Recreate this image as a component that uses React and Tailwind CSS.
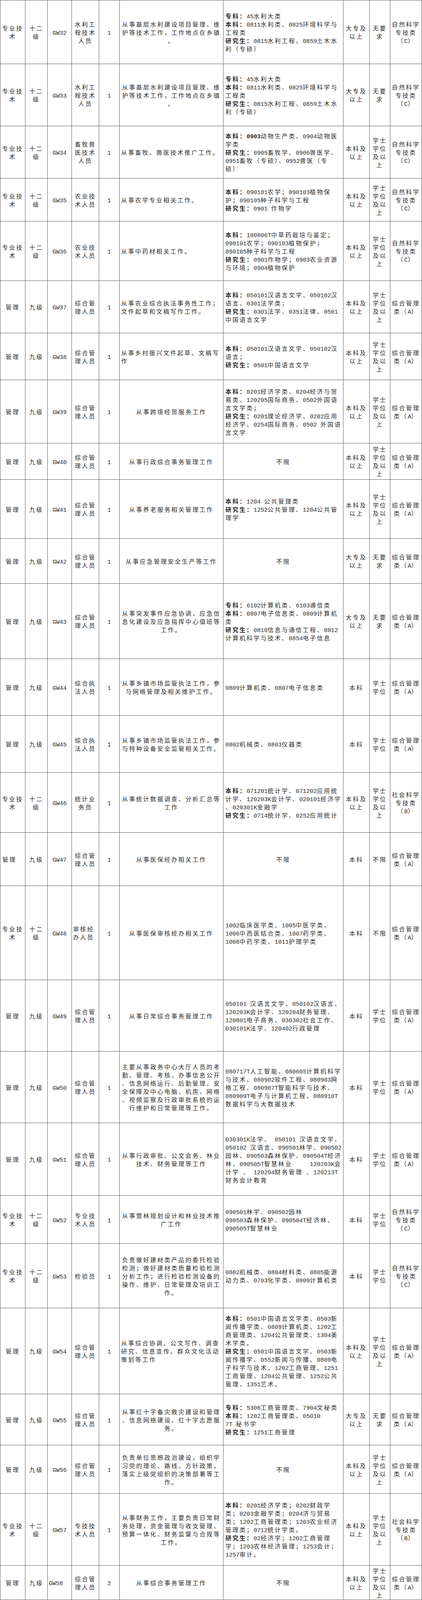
import React from "react";

const ZY = "专业技\n术";
const SEJ = "十二\n级";
const GL = "管理";
const JJ = "九级";
const ZHGL = "综合管\n理人员";
const ZHZF = "综合执\n法人员";
const DZ = "大专及\n以上";
const BKS = "本科及\n以上";
const BK = "本科";
const WYQ = "无要\n求";
const XSJ = "学士\n学位\n及以\n上";
const XS = "学士\n学位";
const BX = "不限";
const ZRC = "自然科学\n专技类\n（C）";
const ZHA = "综合管理\n类（A）";
const SHB = "社会科学\n专技类\n（B）";

const SL_F = "从事基层水利建设项目管理、维\n护等技术工作，工作地点在乡镇\n。";
const SL_G =
  "**专科：**45水利大类\n**本科：**0811水利类、0825环境科学与\n工程类\n**研究生：**0815水利工程、0859土木水\n利（专硕）";

const rows = [
  { h: "h-[163px]", a: ZY, b: SEJ, c: "GW32", d: "水利工\n程技术\n人员", e: "1", f: SL_F, g: SL_G, i: DZ, j: WYQ, k: ZRC },
  { h: "h-[159px]", a: ZY, b: SEJ, c: "GW33", d: "水利工\n程技术\n人员", e: "1", f: SL_F, g: SL_G, i: DZ, j: WYQ, k: ZRC },
  {
    h: "h-[134px]", a: ZY, b: SEJ, c: "GW34", d: "畜牧兽\n医技术\n人员", e: "1",
    f: "从事畜牧、兽医技术推广工作。", fl: true,
    g: "**本科：0903**动物生产类、0904动物医\n学类\n**研究生：**0905畜牧学、0906兽医学、\n0951畜牧（专硕）、0952兽医（专\n硕）",
    i: BKS, j: XSJ, k: ZRC,
  },
  {
    h: "h-[110px]", a: ZY, b: SEJ, c: "GW35", d: "农业技\n术人员", e: "1",
    f: "从事农学专业相关工作。", fl: true,
    g: "**本科：**090101农学；090103植物保\n护；090105种子科学与工程\n**研究生：**0901 作物学",
    i: BKS, j: XSJ, k: ZRC,
  },
  {
    h: "h-[152px]", a: ZY, b: SEJ, c: "GW36", d: "农业技\n术人员", e: "1",
    f: "从事中药材相关工作。", fl: true,
    g: "**本科：**100806T中草药栽培与鉴定；\n090101农学；090103植物保护；\n090105种子科学与工程\n**研究生：**0901作物学；0903农业资源\n与环境；0904植物保护",
    i: BKS, j: XSJ, k: ZRC,
  },
  {
    h: "h-[134px]", a: GL, b: JJ, c: "GW37", d: ZHGL, e: "1",
    f: "从事农业综合执法事务性工作；\n文件起草和文稿写作工作。", fl: true,
    g: "**本科：**050101汉语言文学、050102汉\n语言、0301法学类；\n**研究生：**0301法学、0351法律、0501\n中国语言文学",
    i: BKS, j: XSJ, k: ZHA,
  },
  {
    h: "h-[120px]", a: GL, b: JJ, c: "GW38", d: ZHGL, e: "1",
    f: "从事乡村振兴文件起草、文稿写\n作", fl: true,
    g: "**本科：**050101汉语言文学、050102汉\n语言；\n**研究生：**0501中国语言文学",
    i: BKS, j: XSJ, k: ZHA,
  },
  {
    h: "h-[162px]", a: GL, b: JJ, c: "GW39", d: ZHGL, e: "1",
    f: "从事跨境经贸服务工作",
    g: "**本科：**0201经济学类、0204经济与贸\n易类、120205国际商务、0502外国语\n言文学类；\n**研究生：**0201理论经济学、0202应用\n经济学、0254国际商务、0502 外国语\n言文学",
    i: BKS, j: XSJ, k: ZHA,
  },
  {
    h: "h-[93px]", a: GL, b: JJ, c: "GW40", d: ZHGL, e: "1",
    f: "从事行政综合事务管理工作", g: BX, gc: true,
    i: BKS, j: XSJ, k: ZHA,
  },
  {
    h: "h-[151px]", a: GL, b: JJ, c: "GW41", d: ZHGL, e: "1",
    f: "从事养老服务相关管理工作",
    g: "**本科：**1204 公共管理类\n**研究生：**1252公共管理、1204公共管\n理学",
    i: BKS, j: XSJ, k: ZHA,
  },
  {
    h: "h-[115px]", a: GL, b: JJ, c: "GW42", d: ZHGL, e: "1",
    f: "从事应急管理安全生产等工作", g: BX, gc: true,
    i: DZ, j: WYQ, k: ZHA,
  },
  {
    h: "h-[193px]", a: GL, b: JJ, c: "GW43", d: ZHGL, e: "1",
    f: "从事突发事件应急协调、应急信\n息化建设及应急指挥中心值班等\n工作。",
    g: "**专科：**6102计算机类、6103通信类\n**本科：**0807电子信息类、0809计算机\n类\n**研究生：**0810信息与通信工程、0812\n计算机科学与技术、0854电子信息",
    i: DZ, j: WYQ, k: ZHA,
  },
  {
    h: "h-[145px]", a: GL, b: JJ, c: "GW44", d: ZHZF, e: "1",
    f: "从事乡镇市场监管执法工作，参\n与网络管理及相关维护工作。",
    g: "0809计算机类、0807电子信息类",
    i: BK, j: XS, k: ZHA,
  },
  {
    h: "h-[146px]", a: GL, b: JJ, c: "GW45", d: ZHZF, e: "1",
    f: "从事乡镇市场监管执法工作，参\n与特种设备安全监管相关工作。",
    g: "0802机械类、0803仪器类",
    i: BK, j: XS, k: ZHA,
  },
  {
    h: "h-[154px]", a: ZY, b: SEJ, c: "GW46", d: "统计业\n务员", e: "1",
    f: "从事统计数据调查、分析汇总等\n工作",
    g: "**本科：**071201统计学、071202应用统\n计学、120203K会计学、020101经济学\n、020301K金融学\n**研究生：**0714统计学、0252应用统计",
    i: BKS, j: XSJ, k: SHB,
  },
  {
    h: "h-[136px]", a: GL, al: true, b: JJ, c: "GW47", d: ZHGL, e: "1",
    f: "从事医保经办相关工作", g: BX, gc: true,
    i: BK, j: BX, k: ZHA,
  },
  {
    h: "h-[241px]", a: ZY, b: SEJ, c: "GW48", d: "审核经\n办人员", dl: true, e: "1",
    f: "从事医保审核经办相关工作",
    g: "1002临床医学类、1005中医学类、\n1006中西医结合类、1007药学类、\n1008中药学类、1011护理学类",
    i: BK, j: BX, k: ZHA,
  },
  {
    h: "h-[183px]", a: GL, b: JJ, c: "GW49", d: ZHGL, e: "1",
    f: "从事日常综合事务管理工作",
    g: "050101 汉语言文学、050102汉语言、\n120203K会计学、120204财务管理、\n120801电子商务、030302社会工作、\n030101K法学、120402行政管理",
    i: BK, j: XS, k: ZHA,
  },
  {
    h: "h-[183px]", a: GL, b: JJ, c: "GW50", d: ZHGL, e: "1",
    f: "主要从事政务中心大厅人员的考\n勤、管理、考核、办事信息公开\n、信息网络运行、后勤管理、安\n全保障及中心电脑、机房、网络\n、视频监察及行政审批系统的运\n行维护和日常管理等工作。",
    g: "080717T人工智能、080605计算机科学\n与技术、080902软件工程、080903网\n络工程、080907T智能科学与技术、\n080909T电子与计算机工程、080910T\n数据科学与大数据技术",
    i: BK, j: XS, k: ZHA,
  },
  {
    h: "h-[186px]", a: GL, b: JJ, c: "GW51", d: ZHGL, e: "1",
    f: "从事行政审批、公文会务、林业\n技术、财务管理等工作",
    g: "030301K法学、 050101 汉语言文学、\n050102 汉语言、090501林学、090502\n园林、090503森林保护、090504T经济\n林、090505T智慧林业     120203K会\n计学 、 120204财务管理 、120213T\n财务会计教育",
    i: BK, j: XS, k: ZHA,
  },
  {
    h: "h-[123px]", a: ZY, b: SEJ, c: "GW52", d: "专业技\n术人员", e: "1",
    f: "从事营林规划设计和林业技术推\n广工作",
    g: "090501林学、090502园林\n090503森林保护、090504T经济林、\n090505T智慧林业",
    i: BK, j: XS, k: ZRC,
  },
  {
    h: "h-[165px]", a: ZY, b: SEJ, c: "GW53", d: "检验员", e: "1",
    f: "负责做好建材类产品的委托检验\n检测；做好建材类质量检验检测\n分析工作；进行检验检测设备的\n操作、维护、日常管理及培训工\n作。",
    g: "0802机械类、0804材料类、0805能源\n动力类、0703化学类、0809计算机类",
    i: BK, j: XS, k: ZRC,
  },
  {
    h: "h-[220px]", a: GL, b: JJ, c: "GW54", d: ZHGL, e: "1",
    f: "从事综合协调、公文写作、调查\n研究、信息宣传、群众文化活动\n策划等工作", fl: true,
    g: "**本科：**0501中国语言文学类、0503新\n闻传播学类、0809计算机类、1202工\n商管理类、1204公共管理类、1304美\n术学类。\n**研究生：**0501中国语言文学、0503新\n闻传播学、0552新闻与传播、0809电\n子科学与技术、1202工商管理、1251\n工商管理、1204公共管理、1252公共\n管理、1351艺术。",
    i: BKS, j: XSJ, k: ZHA,
  },
  {
    h: "h-[131px]", a: GL, b: JJ, c: "GW55", d: ZHGL, e: "1",
    f: "从事红十字备灾救灾建设和管理\n、信息网络建设、红十字志愿服\n务。",
    g: "**专科：**5306工商管理类、7904文秘类\n**本科：**1202工商管理类、05010\n7T 秘书学\n**研究生：**1251工商管理",
    i: DZ, j: WYQ, k: ZHA,
  },
  {
    h: "h-[124px]", a: GL, b: JJ, c: "GW56", d: ZHGL, e: "1",
    f: "负责单位思想政治建设，组织学\n习党的理论、路线、方针政策，\n落实上级党组织的决策部署等工\n作。",
    g: BX, gc: true,
    i: BKS, j: XSJ, k: ZHA,
  },
  {
    h: "h-[184px]", a: ZY, b: SEJ, c: "GW57", d: "专技技\n术人员", e: "1",
    f: "从事财务工作，主要负责日常财\n务处理，资金管理与收支管理、\n预算一体化、财务监督与合规等\n工作。",
    g: "**本科：**0201经济学类；0202财政学\n类；0203金融学类；0204济与贸易\n类；1202工商管理类；1203农业经济\n管理类；0712统计学类。\n**研究生：**02经济学；1202工商管理\n学；1203农林经济管理；1253会计；\n1257审计。",
    i: BKS, j: XSJ, k: SHB,
  },
  {
    h: "h-[88px]", a: GL, b: JJ, c: "GW58", cl: true, d: ZHGL, e: "2",
    f: "从事综合事务管理工作", g: BX, gc: true,
    i: BKS, j: XSJ, k: ZHA,
  },
];

const CJK_RE = /[\u2e80-\u9fff\u3000-\u303f\uff00-\uffef]+|[^\u2e80-\u9fff\u3000-\u303f\uff00-\uffef]+/g;
const IS_CJK = /[\u2e80-\u9fff\u3000-\u303f\uff00-\uffef]/;

function Runs({ text, bold }) {
  const parts = text.match(CJK_RE) || [];
  return parts.map((p, i) =>
    IS_CJK.test(p[0]) ? (
      <span key={i} className={bold ? "tracking-[3px] font-bold" : "tracking-[3px]"}>
        {p}
      </span>
    ) : (
      <span
        key={i}
        className={
          bold
            ? "font-['Liberation_Mono',monospace] leading-[14px] font-bold"
            : "font-['Liberation_Mono',monospace] leading-[14px]"
        }
      >
        {p}
      </span>
    )
  );
}

function Rich({ text }) {
  const segs = text.split("**");
  return segs.map((s, i) => <Runs key={i} text={s} bold={i % 2 === 1} />);
}

function Cell({ w, text, left, pad = "" }) {
  return (
    <div
      className={`${w} shrink-0 border-r border-[#5a5a5a] flex items-center ${
        left ? "justify-start text-left" : "justify-center text-center"
      } ${pad}`}
    >
      <div className="whitespace-pre">
        <Rich text={text} />
      </div>
    </div>
  );
}

export default function App() {
  return (
    <div className="w-[1080px] bg-white">
      <div className="w-[1080px] border-t border-l border-[#5a5a5a] text-[15px] leading-[21px] text-[#2a2a2a] font-['Noto_Sans_CJK_SC',sans-serif]">
        {rows.map((r) => (
          <div key={r.c} className={`flex ${r.h} border-b border-[#5a5a5a]`}>
            <Cell w="w-[64px]" text={r.a} left={r.al} pad={r.al ? "pl-[5px]" : ""} />
            <Cell w="w-[57px]" text={r.b} />
            <Cell w="w-[62px]" text={r.c} left={r.cl} pad={r.cl ? "pl-[3px]" : ""} />
            <Cell w="w-[70px]" text={r.d} left={r.dl} pad={r.dl ? "pl-[3px]" : ""} />
            <Cell w="w-[52px]" text={r.e} />
            <Cell w="w-[266px]" text={r.f} left={r.fl} pad={r.fl ? "pl-[4px]" : ""} />
            <Cell w="w-[307px]" text={r.g} left={!r.gc} pad={r.gc ? "" : "pl-[5px]"} />
            <Cell w="w-[67px]" text={r.i} />
            <Cell w="w-[53px]" text={r.j} />
            <Cell w="w-[81px]" text={r.k} />
          </div>
        ))}
      </div>
    </div>
  );
}
